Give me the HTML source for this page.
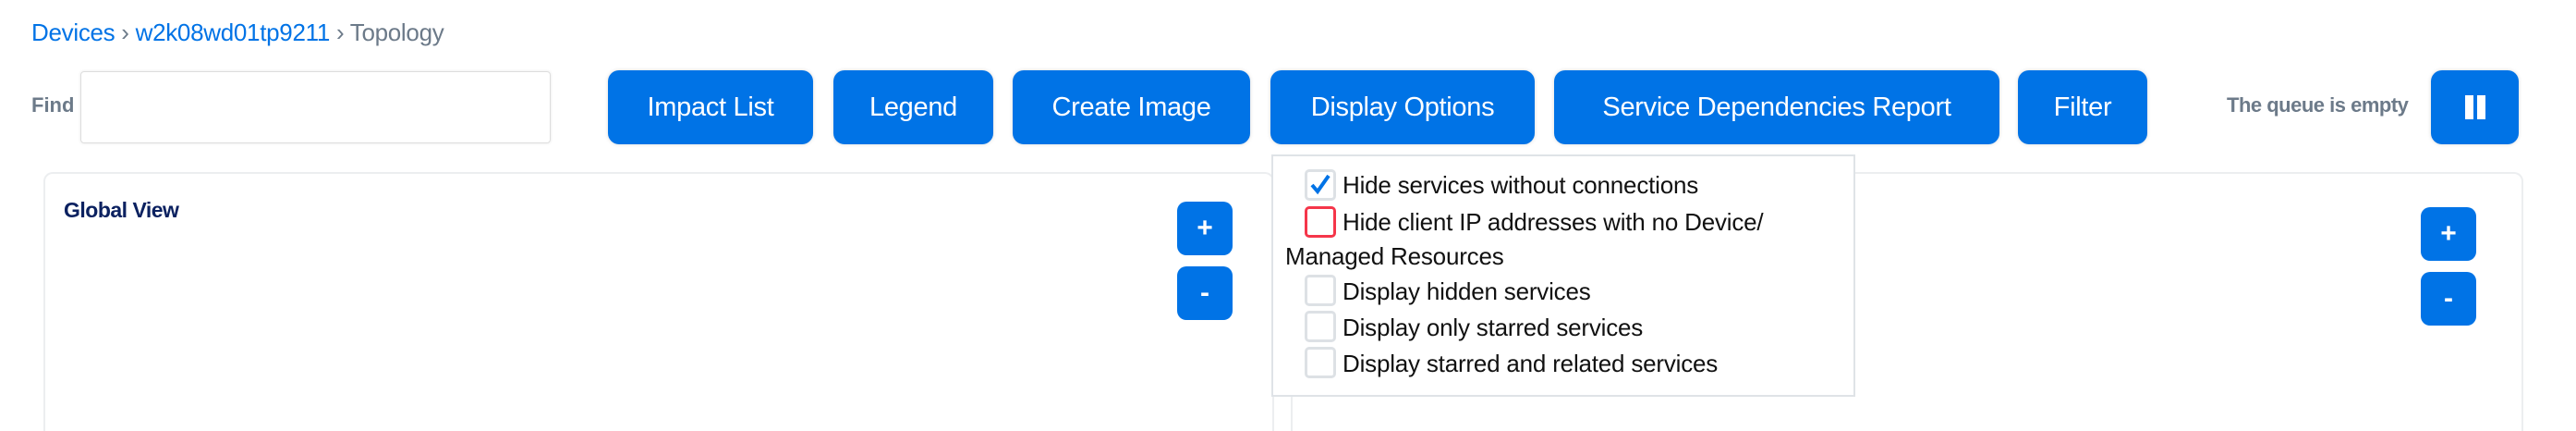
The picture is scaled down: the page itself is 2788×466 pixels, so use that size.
<!DOCTYPE html>
<html style="height:466px;overflow:hidden"><head><style>
body{margin:0;width:2788px;height:466px;background:#fff;font-family:"Liberation Sans",sans-serif;overflow:hidden}
#w{position:relative;width:2788px;height:466px;overflow:hidden}
.a{position:absolute}
.bc{left:34px;top:20px;font-size:26px;color:#6c7a89;white-space:nowrap;letter-spacing:-0.3px}
.bc b{font-weight:normal;color:#0073e6}
.btn{position:absolute;top:76px;height:80px;background:#0073e6;color:#fff;border-radius:12px;font-size:29px;display:flex;align-items:center;justify-content:center;box-shadow:0 0 4px rgba(0,0,0,.15);white-space:nowrap;letter-spacing:-0.3px}
.panel{position:absolute;top:186px;height:280px;box-sizing:border-box;border:2px solid #eceef0;border-bottom:none;border-radius:10px 10px 0 0;background:#fff}
.zb{position:absolute;width:60px;height:58px;background:#0073e6;border-radius:10px;color:#fff;font-size:30px;font-weight:bold;display:flex;align-items:center;justify-content:center}
.dd{position:absolute;left:1376px;top:167px;width:628px;height:258px;border:2px solid #dfe3e7;background:#fff;font-size:26px;color:#111;letter-spacing:-0.2px}
.cb{position:absolute;left:34px;width:28px;height:28px;border:3px solid #dde1e5;border-radius:5px;background:#fff}
.t{position:absolute;left:75px;white-space:nowrap}
</style></head><body><div id="w">
<div class="a bc"><b>Devices</b> › <b>w2k08wd01tp9211</b> › Topology</div>
<div class="a" style="left:34px;top:101px;font-size:22px;font-weight:bold;color:#6c7a89">Find</div>
<div class="a" style="left:87px;top:77px;width:507px;height:76px;border:1px solid #ddd;border-radius:4px;box-shadow:0 0 3px rgba(0,0,0,.1)"></div>
<div class="btn" style="left:658px;width:222px">Impact List</div>
<div class="btn" style="left:902px;width:173px">Legend</div>
<div class="btn" style="left:1096px;width:257px">Create Image</div>
<div class="btn" style="left:1375px;width:286px">Display Options</div>
<div class="btn" style="left:1682px;width:482px">Service Dependencies Report</div>
<div class="btn" style="left:2184px;width:140px">Filter</div>
<div class="a" style="left:2410px;top:101px;font-size:22px;font-weight:bold;color:#6c7a89;white-space:nowrap;letter-spacing:-0.5px">The queue is empty</div>
<div class="btn" style="left:2631px;width:95px"><span style="display:inline-block;width:9px;height:26px;background:#fff;margin-right:4px"></span><span style="display:inline-block;width:9px;height:26px;background:#fff"></span></div>

<div class="panel" style="left:47px;width:1332px"></div>
<div class="panel" style="left:1397px;width:1334px"></div>
<div class="a" style="left:69px;top:214px;font-size:23px;font-weight:bold;color:#0b2160;letter-spacing:-0.5px">Global View</div>
<div class="zb" style="left:1274px;top:218px">+</div>
<div class="zb" style="left:1274px;top:288px">-</div>
<div class="zb" style="left:2620px;top:224px">+</div>
<div class="zb" style="left:2620px;top:294px">-</div>

<div class="dd">
<div class="cb" style="top:14px"><svg width="28" height="28" viewBox="0 0 28 28" style="position:absolute;left:0;top:0"><path d="M5 14 L11 21 L23 4" stroke="#0073e6" stroke-width="4" fill="none"/></svg></div>
<div class="t" style="top:16px">Hide services without connections</div>
<div class="cb" style="top:54px;border-color:#f5364a;left:34px"></div>
<div class="t" style="top:56px">Hide client IP addresses with no Device/</div>
<div class="t" style="left:13px;top:93px">Managed Resources</div>
<div class="cb" style="top:128px"></div>
<div class="t" style="top:131px">Display hidden services</div>
<div class="cb" style="top:167px"></div>
<div class="t" style="top:170px">Display only starred services</div>
<div class="cb" style="top:206px"></div>
<div class="t" style="top:209px">Display starred and related services</div>
</div>
</div></body></html>
